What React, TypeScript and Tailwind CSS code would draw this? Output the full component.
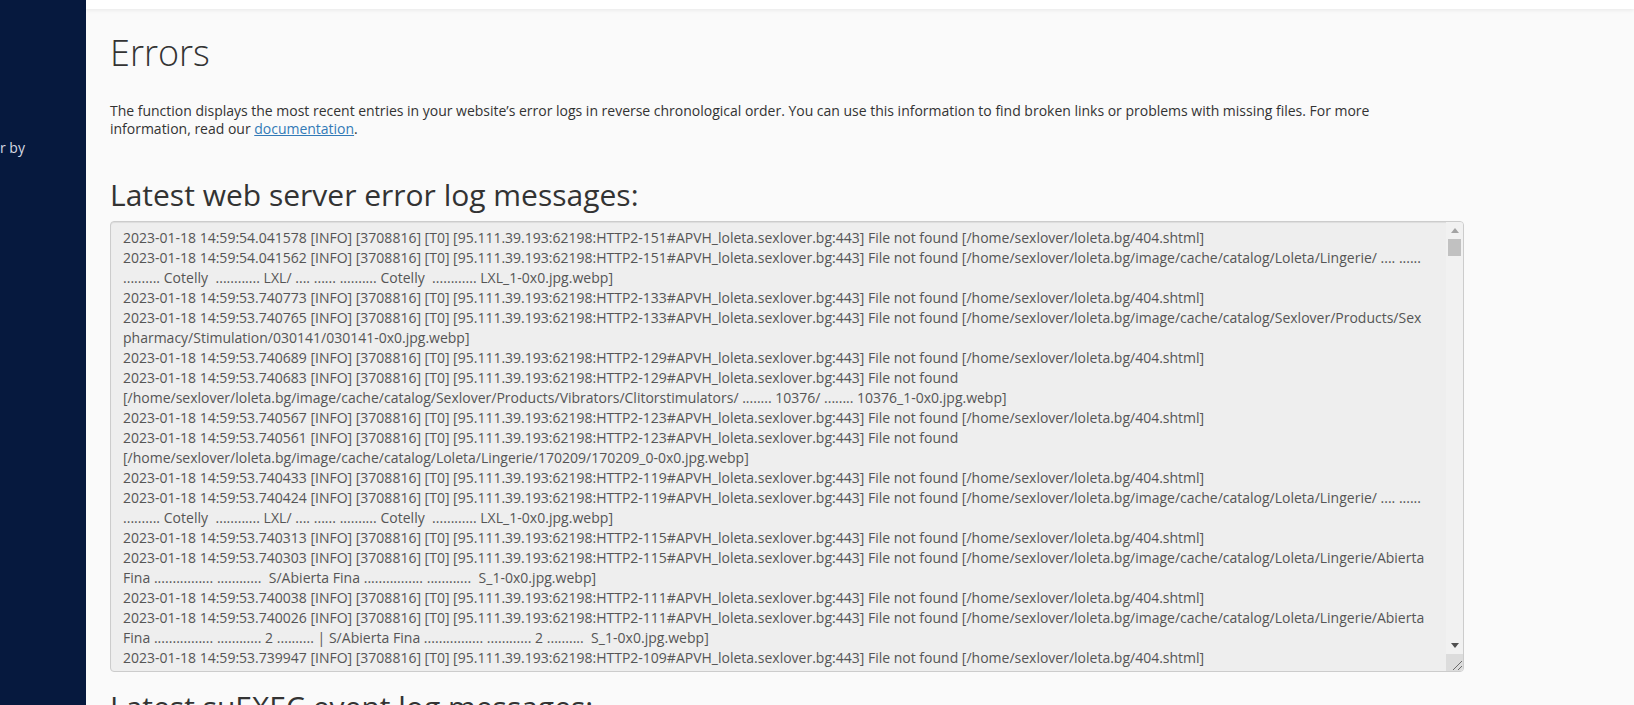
const P = '[INFO] [3708816] [T0] [95.111.39.193:62198:HTTP2-'
const H = '#APVH_loleta.sexlover.bg:443] File not found '

const logLines = [
  `2023-01-18 14:59:54.041578 ${P}151${H}[/home/sexlover/loleta.bg/404.shtml]`,
  `2023-01-18 14:59:54.041562 ${P}151${H}[/home/sexlover/loleta.bg/image/cache/catalog/Loleta/Lingerie/ .... ......`,
  '.......... Cotelly  ............ LXL/ .... ...... .......... Cotelly  ............ LXL_1-0x0.jpg.webp]',
  `2023-01-18 14:59:53.740773 ${P}133${H}[/home/sexlover/loleta.bg/404.shtml]`,
  `2023-01-18 14:59:53.740765 ${P}133${H}[/home/sexlover/loleta.bg/image/cache/catalog/Sexlover/Products/Sex`,
  'pharmacy/Stimulation/030141/030141-0x0.jpg.webp]',
  `2023-01-18 14:59:53.740689 ${P}129${H}[/home/sexlover/loleta.bg/404.shtml]`,
  `2023-01-18 14:59:53.740683 ${P}129${H}`,
  '[/home/sexlover/loleta.bg/image/cache/catalog/Sexlover/Products/Vibrators/Clitorstimulators/ ........ 10376/ ........ 10376_1-0x0.jpg.webp]',
  `2023-01-18 14:59:53.740567 ${P}123${H}[/home/sexlover/loleta.bg/404.shtml]`,
  `2023-01-18 14:59:53.740561 ${P}123${H}`,
  '[/home/sexlover/loleta.bg/image/cache/catalog/Loleta/Lingerie/170209/170209_0-0x0.jpg.webp]',
  `2023-01-18 14:59:53.740433 ${P}119${H}[/home/sexlover/loleta.bg/404.shtml]`,
  `2023-01-18 14:59:53.740424 ${P}119${H}[/home/sexlover/loleta.bg/image/cache/catalog/Loleta/Lingerie/ .... ......`,
  '.......... Cotelly  ............ LXL/ .... ...... .......... Cotelly  ............ LXL_1-0x0.jpg.webp]',
  `2023-01-18 14:59:53.740313 ${P}115${H}[/home/sexlover/loleta.bg/404.shtml]`,
  `2023-01-18 14:59:53.740303 ${P}115${H}[/home/sexlover/loleta.bg/image/cache/catalog/Loleta/Lingerie/Abierta`,
  'Fina ................ ............  S/Abierta Fina ................ ............  S_1-0x0.jpg.webp]',
  `2023-01-18 14:59:53.740038 ${P}111${H}[/home/sexlover/loleta.bg/404.shtml]`,
  `2023-01-18 14:59:53.740026 ${P}111${H}[/home/sexlover/loleta.bg/image/cache/catalog/Loleta/Lingerie/Abierta`,
  'Fina ................ ............ 2 .......... | S/Abierta Fina ................ ............ 2 ..........  S_1-0x0.jpg.webp]',
  `2023-01-18 14:59:53.739947 ${P}109${H}[/home/sexlover/loleta.bg/404.shtml]`,
]

function Scrollbar() {
  return (
    <div className="flex w-[17px] shrink-0 flex-col items-center bg-[#f1f1f1]">
      <div className="flex h-[17px] w-full items-center justify-center">
        <svg width="8" height="5" viewBox="0 0 8 5"><path d="M4 0 8 5H0z" fill="#a3a3a3" /></svg>
      </div>
      <div className="h-[17px] w-[13px] bg-[#c1c1c1]" />
      <div className="flex-1" />
      <div className="flex h-[17px] w-full items-center justify-center">
        <svg width="8" height="5" viewBox="0 0 8 5"><path d="M0 0H8L4 5z" fill="#505050" /></svg>
      </div>
      <div className="flex h-[17px] w-full items-end justify-end bg-[#dcdcdc]">
        <svg width="14" height="14" viewBox="0 0 14 14">
          <path d="M13 4 4 13M13 9 9 13" stroke="#6b6b6b" strokeWidth="1" fill="none" />
        </svg>
      </div>
    </div>
  )
}

export default function App() {
  return (
    <div className="flex h-[705px] overflow-hidden bg-[#fafafa] font-['Open_Sans',sans-serif] text-[14px] text-[#333]">
      <aside className="flex w-[86px] shrink-0 flex-col bg-[#06193e] pt-[138px]">
        <div className="leading-[20px] whitespace-nowrap text-[#d5dae3]">r by</div>
      </aside>
      <div className="min-w-0 flex-1">
        <div className="h-[9px] bg-white shadow-[0_1px_4px_rgba(0,0,0,0.08)]" />
        <main className="pl-[24px]">
          <h1 className="mt-[18px] text-[36px] leading-[52px] font-light text-[#333]">Errors</h1>
          <p className="mt-[23px] w-[1270px] leading-[18px] tracking-[-0.01px]">
            The function displays the most recent entries in your website’s error logs in reverse chronological order. You can use this information to find broken links or problems with missing files. For more information, read our{' '}
            <a href="#" className="text-[#337ab7] underline">documentation</a>.
          </p>
          <h2 className="mt-[37px] text-[30px] leading-[40px] text-[#333]">Latest web server error log messages:</h2>
          <div className="mt-[6px] flex h-[451px] w-[1354px] overflow-hidden rounded-[4px] border border-[#cccccc] bg-[#eeeeee] text-[#555] shadow-[inset_0_1px_1px_rgba(0,0,0,0.075)]">
            <div className="min-w-0 flex-1 overflow-hidden px-[12px] pt-[6px] leading-[20px]">
              {logLines.map((line, i) => (
                <div key={i} className={line.startsWith('.') || line.startsWith('Fina') ? 'whitespace-pre tracking-[0.03px]' : 'whitespace-pre'}>
                  {line}
                </div>
              ))}
            </div>
            <Scrollbar />
          </div>
          <h2 className="mt-[15px] text-[30px] leading-[40px] text-[#333]">Latest suEXEC event log messages:</h2>
        </main>
      </div>
    </div>
  )
}
